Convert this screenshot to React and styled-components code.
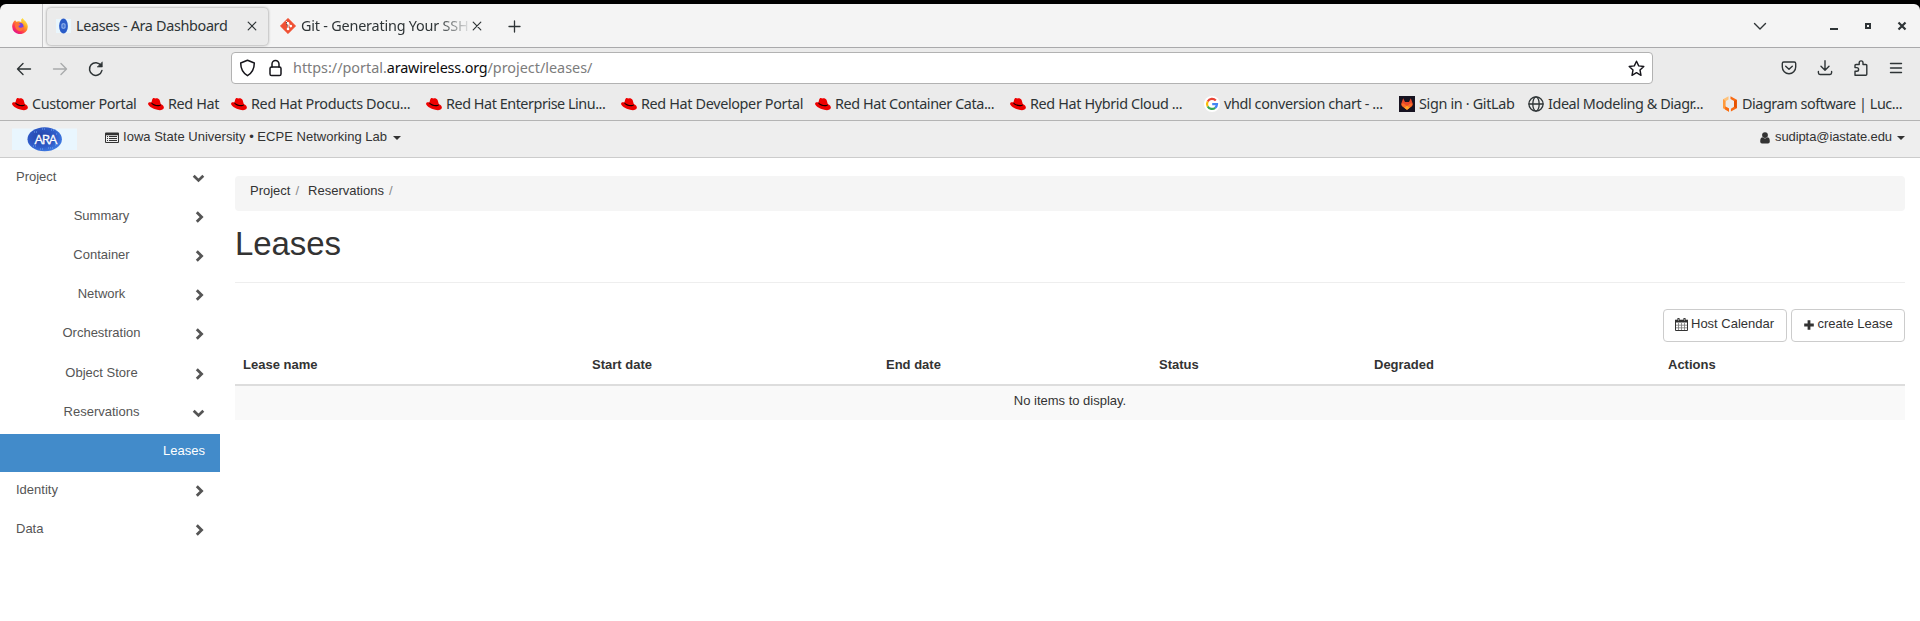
import React from 'react';
import styled, { createGlobalStyle, css } from 'styled-components';

const GlobalStyle = createGlobalStyle`
  * { box-sizing: border-box; }
  body { margin: 0; background: #fff; }
  svg { display: block; flex: none; }
`;

const uiFont = css`font-family: "Noto Sans", "Open Sans", sans-serif;`;

const Page = styled.div`
  width: 1920px;
  height: 621px;
  overflow: hidden;
  background: #fff;
  color: #333;
  font: 13px/18.57px "Liberation Sans", Arial, sans-serif;
`;

/* ---------- browser chrome ---------- */
const Chrome = styled.header`
  ${uiFont}
  background: #000;
  color: #2e3436;
  padding-top: 4px;
`;
const TabStrip = styled.div`
  display: flex;
  height: 44px;
  background: #f4f4f4;
  border-bottom: 1px solid #a9a9ab;
  border-radius: 6px 6px 0 0;
`;
const PinnedTab = styled.div`
  width: 43px;
  border-right: 1px solid #c4c4c6;
  padding: 14px 0 0 12px;
`;
const Tab = styled.div`
  display: flex;
  align-items: center;
  width: ${(p) => p.$width}px;
  height: 37px;
  margin: 4px 0 0 4px;
  padding: 0 ${(p) => p.$end}px 1px ${(p) => p.$start}px;
  border-radius: 4px;
  ${(p) => p.$active && css`
    background: #ebebeb;
    box-shadow: 0 0 3px rgba(0, 0, 0, 0.45);
  `}
`;
const TabTitle = styled.span`
  flex: 1;
  margin-left: ${(p) => p.$gap}px;
  white-space: nowrap;
  font-size: 14.4px;
  line-height: 22px;
  letter-spacing: ${(p) => p.$spacing}px;
  ${(p) => p.$fade && css`mask-image: linear-gradient(to right, #000 calc(100% - 34px), transparent);`}
`;
const NewTab = styled.div`padding: 16px 0 0 17px;`;
const WindowControls = styled.div`
  display: flex;
  margin-left: auto;
  padding: 13px 13px 0 0;
`;
const ControlSlot = styled.div`
  width: ${(p) => p.$width}px;
  display: flex;
  justify-content: flex-end;
`;
const Toolbar = styled.div`
  display: flex;
  align-items: center;
  height: 40px;
  background: #ebebeb;
  padding-right: 17px;
`;
const NavButtons = styled.div`
  display: flex;
  gap: 20px;
  width: 231px;
  padding: 2px 0 0 16px;
`;
const AddressBar = styled.div`
  display: flex;
  align-items: center;
  width: 1422px;
  height: 32px;
  padding: 0 7px;
  background: #fff;
  border: 1px solid #b2b2b2;
  border-radius: 4px;
`;
const Url = styled.span`
  flex: 1;
  margin-left: 9px;
  font-size: 14.4px;
  line-height: 22px;
  letter-spacing: -0.01px;
  color: #7c7c7c;
  b { font-weight: 400; color: #0c0c0d; letter-spacing: -0.18px; }
`;
const ShieldSlot = styled.div`margin: 0 11px 0 0;`;
const ToolIcons = styled.div`
  display: flex;
  gap: 20px;
  margin-left: auto;
`;
const Bookmarks = styled.div`
  display: flex;
  height: 33px;
  padding: 5px 0 0 12px;
  background: #ebebeb;
  border-bottom: 1px solid #b4b4b4;
`;
const Bookmark = styled.div`
  display: flex;
  align-items: center;
  gap: 4px;
  flex: none;
  height: 22px;
  width: ${(p) => p.$width}px;
  white-space: nowrap;
  font-size: 14.4px;
  letter-spacing: ${(p) => p.$spacing}px;
`;

/* ---------- dashboard ---------- */
const TopBar = styled.div`
  display: flex;
  align-items: center;
  height: 37px;
  padding: 0 15px 0 12px;
  background: #eee;
  border-bottom: 1px solid #ccc;
`;
const Menu = styled.div`
  display: flex;
  align-items: center;
  height: 20px;
  margin: ${(p) => (p.$right ? '-3px 0 0 auto' : '-3px 0 0 28px')};
  white-space: nowrap;
`;
const MenuLabel = styled.span`
  margin: 0 ${(p) => p.$end}px 0 ${(p) => p.$gap}px;
  letter-spacing: ${(p) => p.$spacing || 0}px;
`;
const Caret = styled.span`
  margin-top: 1px;
  border: 4px solid transparent;
  border-top-color: #333;
  border-bottom: 0;
`;
const Body = styled.div`display: flex;`;
const Sidebar = styled.nav`
  width: 220px;
  padding-top: 2px;
  color: #555;
`;
const SideItem = styled.div`
  display: grid;
  grid-template-columns: ${(p) => (p.$level === 1 ? '58px 87px 1fr' : '1fr auto')};
  align-items: start;
  height: 38.2px;
  margin-bottom: 0.95px;
  padding: 7.9px 15px 0 ${(p) => (p.$level === 0 ? 16 : 15)}px;
  text-align: ${(p) => (p.$level === 1 ? 'center' : 'left')};
  ${(p) => p.$active && css`
    background: #428bca;
    color: #fff;
  `}
`;
const SideLabel = styled.span`
  white-space: nowrap;
  ${(p) => p.$level === 1 && css`
    grid-column: 1 / 3;
    padding-left: 28px;
  `}
  ${(p) => p.$level === 2 && css`grid-column: 2;`}
`;
const SideArrow = styled.span`
  justify-self: end;
  padding-top: 4px;
`;
const Content = styled.main`
  width: 1700px;
  padding: 18px 15px 0;
`;
const Breadcrumb = styled.div`
  display: flex;
  height: 35px;
  padding: 6px 15px;
  background: #f5f5f5;
  border-radius: 4px;
`;
const Crumb = styled.span`
  margin-right: 9px;
  &::after {
    content: '/';
    margin-left: 5px;
    color: #8a8a8a;
  }
`;
const PageTitle = styled.h1`
  height: 72px;
  margin: 0;
  padding-top: 15px;
  border-bottom: 1px solid #eee;
  font-size: 33px;
  font-weight: 400;
  line-height: 36px;
  letter-spacing: -0.1px;
`;
const Actions = styled.div`
  display: flex;
  justify-content: flex-end;
  gap: 4px;
  margin-top: 26px;
`;
const Button = styled.button`
  display: flex;
  align-items: center;
  gap: ${(p) => p.$gap}px;
  width: ${(p) => p.$width}px;
  height: 33px;
  padding: 0 0 2px ${(p) => p.$start}px;
  border: 1px solid #ccc;
  border-radius: 4px;
  background: #fff;
  color: #333;
  font: inherit;
  white-space: nowrap;
`;
const Table = styled.div`margin-top: 7px;`;
const TableHead = styled.div`
  display: grid;
  grid-template-columns: 349px 294px 273px 215px 294px 245px;
  height: 37px;
  padding-top: 7px;
  border-bottom: 2px solid #ddd;
  font-weight: 700;
`;
const HeadCell = styled.span`padding: 0 8px;`;
const EmptyRow = styled.div`
  height: 34px;
  padding-top: 6px;
  background: #f9f9f9;
  text-align: center;
`;

/* ---------- icons ---------- */
const Line = ({ w = 16, h = 16, sw = 1.4, color = '#2e3436', children }) => (
  <svg width={w} height={h} viewBox={`0 0 ${w} ${h}`} fill="none" stroke={color} strokeWidth={sw} strokeLinecap="round" strokeLinejoin="round">
    {children}
  </svg>
);

const RedHat = () => (
  <svg width="16" height="16" viewBox="0 0 16 16">
    <path d="M4.3 3.2C5 1.6 6.3 1.9 7.4 2.5C8.6 1.9 10.8 2.4 11.6 4L12.8 8C15 8.8 16.2 10.5 15.8 12.1C15.1 14.7 10.4 14.6 6.5 13C2.8 11.6-.1 9.4.1 7.6C.3 6.3 1.8 6 3.4 6.5Z" fill="#e00" />
    <path d="M3.5 6.4C5.3 8.3 9.8 9.9 12.8 8.4L12.9 9.2C10.8 11.4 4.9 9.9 3.2 7.3Z" fill="#160000" />
  </svg>
);
const Google = () => (
  <svg width="16" height="16" viewBox="0 0 16 16" fill="none" strokeWidth="2.2">
    <circle cx="8" cy="8" r="8" fill="#fff" />
    <path d="M11.8 4.6A5 5 0 0 0 3.7 5.5" stroke="#ea4335" />
    <path d="M3.7 5.5A5 5 0 0 0 3.7 10.5" stroke="#fbbc05" />
    <path d="M3.7 10.5A5 5 0 0 0 11.2 11.8" stroke="#34a853" />
    <path d="M11.2 11.8A5 5 0 0 0 13 8.1H8.2" stroke="#4285f4" />
  </svg>
);
const GitLab = () => (
  <svg width="16" height="16" viewBox="0 0 16 16">
    <rect width="16" height="16" fill="#171321" />
    <path d="M4.2 2.2L6 6H10L11.8 2.2L13.6 7.2C13.9 8.8 13.4 9.8 12.4 10.6L8 13.8L3.6 10.6C2.6 9.8 2.1 8.8 2.4 7.2Z" fill="#e8492a" />
    <path d="M2.5 7.8L4.3 7.2L8 10L11.7 7.2L13.5 7.8Q13.3 9.8 12.4 10.6L8 13.8L3.6 10.6Q2.7 9.8 2.5 7.8Z" fill="#fc6d26" />
    <path d="M5.2 11.8L8 9.8L10.8 11.8L8 13.8Z" fill="#fca326" />
  </svg>
);
const Globe = () => (
  <Line sw={1.3}>
    <circle cx="8" cy="8" r="7.1" />
    <ellipse cx="8" cy="8" rx="3.2" ry="7.1" />
    <path d="M1 8H15" />
  </Line>
);
const Lucid = () => (
  <svg width="16" height="16" viewBox="0 0 16 16">
    <path d="M6.5 .3L1 3.3V7L3.6 5.2L6.5 3.6Z" fill="#ffc27a" />
    <path d="M1 3.3L3.6 5V10.6L7 12.6V15.8L1 12.2Z" fill="#ff9a3d" />
    <path d="M3.2 10.4L7 12.6V15.8L3.2 13.5Z" fill="#f96b13" />
    <path d="M8.5 .3L14.8 3.8V12.2L8.9 15.6V12.7L12 10.8V5L8.5 3Z" fill="#f96b13" />
    <path d="M12 10.8V5L14.8 3.8V12.2Z" fill="#e65100" />
  </svg>
);
const Firefox = () => (
  <svg width="16" height="16" viewBox="0 0 16 16">
    <defs>
      <linearGradient id="ffBody" x1=".85" y1=".05" x2=".2" y2=".9">
        <stop offset="0" stopColor="#fff44f" />
        <stop offset=".4" stopColor="#ff9a1f" />
        <stop offset=".75" stopColor="#ff3750" />
        <stop offset="1" stopColor="#e31587" />
      </linearGradient>
    </defs>
    <path d="M2 3.2L3.2 2.2L4.2 3.8L6.8 3.3L9.4 4L9.1 1.8L10.6 0C11.4 2 15.8 4 15.8 8.7A7.8 7.4 0 0 1 .2 8.7C.2 6.3.8 5 2 3.2Z" fill="url(#ffBody)" />
    <circle cx="7.8" cy="8.4" r="3.7" fill="#7542e5" />
    <path d="M3.5 5.4C5.1 4.4 6.9 4.8 7.8 6C9 6.2 8.5 7.2 7 7.5C6 8.4 6.7 9.7 8.3 9.8C10 9.8 10.7 8.8 11.9 8.7C12 11.5 9.8 13 7.8 12.9C5 12.8 3.2 10.5 3 8Z" fill="#ff7139" />
  </svg>
);
const AraFavicon = () => (
  <svg width="15" height="16" viewBox="0 0 15 16">
    <rect x="0" y="1" width="15" height="14" fill="#e9f6fd" />
    <ellipse cx="7.5" cy="8" rx="4.4" ry="7.4" fill="#2a5cc8" />
    <ellipse cx="7.5" cy="8" rx="2.4" ry="3" fill="#7fa4e6" />
    <path d="M5.5 8H9.5M7.5 6.2V9.8" stroke="#3d6ed2" strokeWidth=".8" />
  </svg>
);
const GitIcon = () => (
  <svg width="16" height="16" viewBox="0 0 16 16">
    <path d="M8 .3L15.7 8L8 15.7L.3 8Z" fill="#f05033" stroke="#f05033" strokeLinejoin="round" strokeWidth=".6" />
    <path d="M5.8 2.9L8 5.2V11M8 5.5L10.7 8.1" stroke="#fff" strokeWidth="1" />
    <g fill="#fff"><circle cx="8" cy="5.2" r="1.3" /><circle cx="8" cy="11" r="1.3" /><circle cx="10.8" cy="8.1" r="1.3" /></g>
  </svg>
);
const Cross = () => <Line w={10} h={10} sw={1.2}><path d="M1.2 1.2L8.8 8.8M8.8 1.2L1.2 8.8" /></Line>;
const LogoSvg = styled.svg`
  text { font: 13.5px "Open Sans", "Noto Sans", sans-serif; letter-spacing: -1.3px; }
`;
const AraLogo = () => (
  <LogoSvg width="65" height="26" viewBox="0 0 65 26">
    <defs>
      <radialGradient id="araGlobe" cx=".4" cy=".4" r=".65">
        <stop offset="0" stopColor="#2543a6" />
        <stop offset=".65" stopColor="#2f5cc9" />
        <stop offset="1" stopColor="#3f7de4" />
      </radialGradient>
    </defs>
    <rect y="2.5" width="65" height="21.5" fill="#e9f6fe" />
    <ellipse cx="32.7" cy="13.2" rx="17.2" ry="12" fill="url(#araGlobe)" />
    <path d="M22 6H25M30 3H33M39 4H42M44 8H46M21 20H24M28 23H31M36 22H41M43 19H45" stroke="#6fa3ee" strokeWidth="1.2" strokeDasharray="1 1" />
    <text x="22.6" y="18.2" fill="#fff" stroke="#fff" strokeWidth=".3">ARA</text>
  </LogoSvg>
);
const ListIcon = () => (
  <svg width="14" height="12" viewBox="0 0 14 12" fill="#333">
    <path fillRule="evenodd" d="M1 .5H13Q14 .5 14 1.5V10Q14 11 13 11H1Q0 11 0 10V1.5Q0 .5 1 .5ZM1 3.2V10H13V3.2Z" />
    <path d="M2 4H3V5H2ZM4 4H12V5H4ZM2 6H3V7H2ZM4 6H12V7H4ZM2 8H3V9H2ZM4 8H12V9H4Z" />
  </svg>
);
const UserIcon = () => (
  <svg width="10" height="12" viewBox="0 0 10 12" fill="#333">
    <circle cx="5" cy="3.1" r="2.9" />
    <path d="M2.2 5.3Q5 7.6 7.8 5.3Q9.8 5.8 9.8 9.5Q9.8 11.6 8 11.6H2Q.2 11.6 .2 9.5Q.2 5.8 2.2 5.3Z" />
  </svg>
);
const CalendarIcon = () => (
  <svg width="13" height="13" viewBox="0 0 13 13">
    <path d="M.5 2.5H12.5V12.5H.5Z" fill="#fff" stroke="#333" />
    <path d="M0 1.7H13V4.5H0Z" fill="#333" />
    <path d="M3.5 5V12M6.5 5V12M9.5 5V12M1 7.2H12M1 9.8H12" stroke="#777" strokeWidth=".8" />
    <path d="M3.5 .8V2.8M9.5 .8V2.8" stroke="#333" strokeWidth="2.2" strokeLinecap="round" />
    <path d="M3.5 .9V2.8M9.5 .9V2.8" stroke="#ccc" strokeWidth=".6" />
  </svg>
);
const PlusIcon = () => (
  <svg width="10" height="10" viewBox="0 0 10 10"><path d="M5 .2V9.8M.2 5H9.8" stroke="#333" strokeWidth="2.8" /></svg>
);
const Arrow = ({ open }) =>
  open ? (
    <svg width="13" height="12" viewBox="0 0 13 12"><path d="M1.7 3.8L6.5 8.4L11.3 3.8" fill="none" stroke="#555" strokeWidth="2.8" /></svg>
  ) : (
    <svg width="10" height="12" viewBox="0 0 10 12"><path d="M1.8 1.2L6.6 6L1.8 10.8" fill="none" stroke="#555" strokeWidth="2.8" /></svg>
  );

/* ---------- data ---------- */
const bookmarks = [
  [RedHat, 'Customer Portal', 136, -0.4],
  [RedHat, 'Red Hat', 83, -0.35],
  [RedHat, 'Red Hat Products Docu...', 195, -0.34],
  [RedHat, 'Red Hat Enterprise Linu...', 195, -0.46],
  [RedHat, 'Red Hat Developer Portal', 194, -0.35],
  [RedHat, 'Red Hat Container Cata...', 195, -0.42],
  [RedHat, 'Red Hat Hybrid Cloud ...', 194, -0.36],
  [Google, 'vhdl conversion chart - ...', 195, -0.38],
  [GitLab, 'Sign in · GitLab', 129, -0.34],
  [Globe, 'Ideal Modeling & Diagr...', 194, -0.42],
  [Lucid, 'Diagram software | Luc...', 190, -0.45],
];
const sideItems = [
  ['Project', 0, true],
  ['Summary', 1],
  ['Container', 1],
  ['Network', 1],
  ['Orchestration', 1],
  ['Object Store', 1],
  ['Reservations', 1, true],
  ['Leases', 2],
  ['Identity', 0],
  ['Data', 0],
];
const columns = ['Lease name', 'Start date', 'End date', 'Status', 'Degraded', 'Actions'];

export default function App() {
  return (
    <Page>
      <GlobalStyle />
      <Chrome>
        <TabStrip>
          <PinnedTab><Firefox /></PinnedTab>
          <Tab $active $width={221} $start={9} $end={11}>
            <AraFavicon />
            <TabTitle $gap={5} $spacing={-0.34}>Leases - Ara Dashboard</TabTitle>
            <Cross />
          </Tab>
          <Tab $width={219} $start={8} $end={9}>
            <GitIcon />
            <TabTitle $gap={5} $spacing={-0.2} $fade>Git - Generating Your SSH</TabTitle>
            <Cross />
          </Tab>
          <NewTab><Line w={13} h={13} sw={1.3}><path d="M6.5 1V12M1 6.5H12" /></Line></NewTab>
          <WindowControls>
            <ControlSlot $width={20}><Line w={14} h={18} sw={1.4}><path d="M1.5 6.5L7 12L12.5 6.5" /></Line></ControlSlot>
            <ControlSlot $width={71}><svg width="8" height="18"><path d="M0 11H8V13H0Z" fill="#2e3436" /></svg></ControlSlot>
            <ControlSlot $width={33}><svg width="6" height="18"><path d="M1 7H5V11H1Z" fill="none" stroke="#2e3436" strokeWidth="2" /></svg></ControlSlot>
            <ControlSlot $width={36}><svg width="10" height="18"><path d="M1.5 5.5L8.5 12.5M8.5 5.5L1.5 12.5" stroke="#2e3436" strokeWidth="2.2" /></svg></ControlSlot>
          </WindowControls>
        </TabStrip>
        <Toolbar>
          <NavButtons>
            <Line><path d="M14.5 8H1.5M7 2.5L1.5 8L7 13.5" /></Line>
            <Line color="#a9abac"><path d="M1.5 8H14.5M9 2.5L14.5 8L9 13.5" /></Line>
            <Line sw={1.5}><path d="M13.9 9.6A6.3 6.3 0 1 1 13 4.5" /><path d="M14.3 1.2V6H9.5Z" fill="#2e3436" strokeWidth=".6" /></Line>
          </NavButtons>
          <AddressBar>
            <ShieldSlot><Line w={17} h={18} sw={1.5} color="#15141a"><path d="M8.5 1.2L15.3 4C15.3 9.4 13.6 13.7 8.5 16.7C3.4 13.7 1.7 9.4 1.7 4Z" /></Line></ShieldSlot>
            <Line w={17} h={18} sw={1.5} color="#15141a"><rect x="3" y="8" width="11" height="8.6" rx="1.6" /><path d="M5 8V5A3.5 3.5 0 0 1 12 5V8" /></Line>
            <Url>https://portal.<b>arawireless.org</b>/project/leases/</Url>
            <Line w={17} h={17} sw={1.4} color="#15141a"><path d="M8.5 1.2L10.7 5.9L15.8 6.5L12 10L13 15.3L8.5 12.7L4 15.3L5 10L1.2 6.5L6.3 5.9Z" /></Line>
          </AddressBar>
          <ToolIcons>
            <Line><path d="M2.8 2H13.2Q14.7 2 14.7 3.5V7A6.7 6.7 0 0 1 1.3 7V3.5Q1.3 2 2.8 2Z" /><path d="M4.7 6.2L8 9.3L11.3 6.2" /></Line>
            <Line><path d="M8 .8V10M4 6.3L8 10.2L12 6.3M1.4 11.4V12.8Q1.4 14.5 3 14.5H13Q14.6 14.5 14.6 12.8V11.4" /></Line>
            <Line><path d="M2 15.2H12.8Q13.8 15.2 13.8 14.2V5.5Q13.8 4.5 12.8 4.5H10V2.8A1.9 1.9 0 0 0 6.2 2.8V4.5H3Q2 4.5 2 5.5V7.6H3.8A1.8 1.8 0 0 1 3.8 11.2H2Z" /></Line>
            <Line w={14} sw={1.4}><path d="M1.5 3.5H12.5M1.5 8H12.5M1.5 12.5H12.5" /></Line>
          </ToolIcons>
        </Toolbar>
        <Bookmarks>
          {bookmarks.map(([Icon, label, width, spacing]) => (
            <Bookmark key={label} $width={width} $spacing={spacing}><Icon />{label}</Bookmark>
          ))}
        </Bookmarks>
      </Chrome>
      <TopBar>
        <AraLogo />
        <Menu>
          <ListIcon />
          <MenuLabel $gap={4} $end={6} $spacing={0.02}>Iowa State University • ECPE Networking Lab</MenuLabel>
          <Caret />
        </Menu>
        <Menu $right>
          <UserIcon />
          <MenuLabel $gap={5} $end={5} $spacing={-0.09}>sudipta@iastate.edu</MenuLabel>
          <Caret />
        </Menu>
      </TopBar>
      <Body>
        <Sidebar>
          {sideItems.map(([label, level, open]) => (
            <SideItem key={label} $level={level} $active={level === 2}>
              <SideLabel $level={level}>{label}</SideLabel>
              {level !== 2 && <SideArrow><Arrow open={open} /></SideArrow>}
            </SideItem>
          ))}
        </Sidebar>
        <Content>
          <Breadcrumb><Crumb>Project</Crumb><Crumb>Reservations</Crumb></Breadcrumb>
          <PageTitle>Leases</PageTitle>
          <Actions>
            <Button $width={124} $start={11} $gap={3}><CalendarIcon />Host Calendar</Button>
            <Button $width={114} $start={12} $gap={3.5}><PlusIcon />create Lease</Button>
          </Actions>
          <Table>
            <TableHead>{columns.map((c) => <HeadCell key={c}>{c}</HeadCell>)}</TableHead>
            <EmptyRow>No items to display.</EmptyRow>
          </Table>
        </Content>
      </Body>
    </Page>
  );
}
